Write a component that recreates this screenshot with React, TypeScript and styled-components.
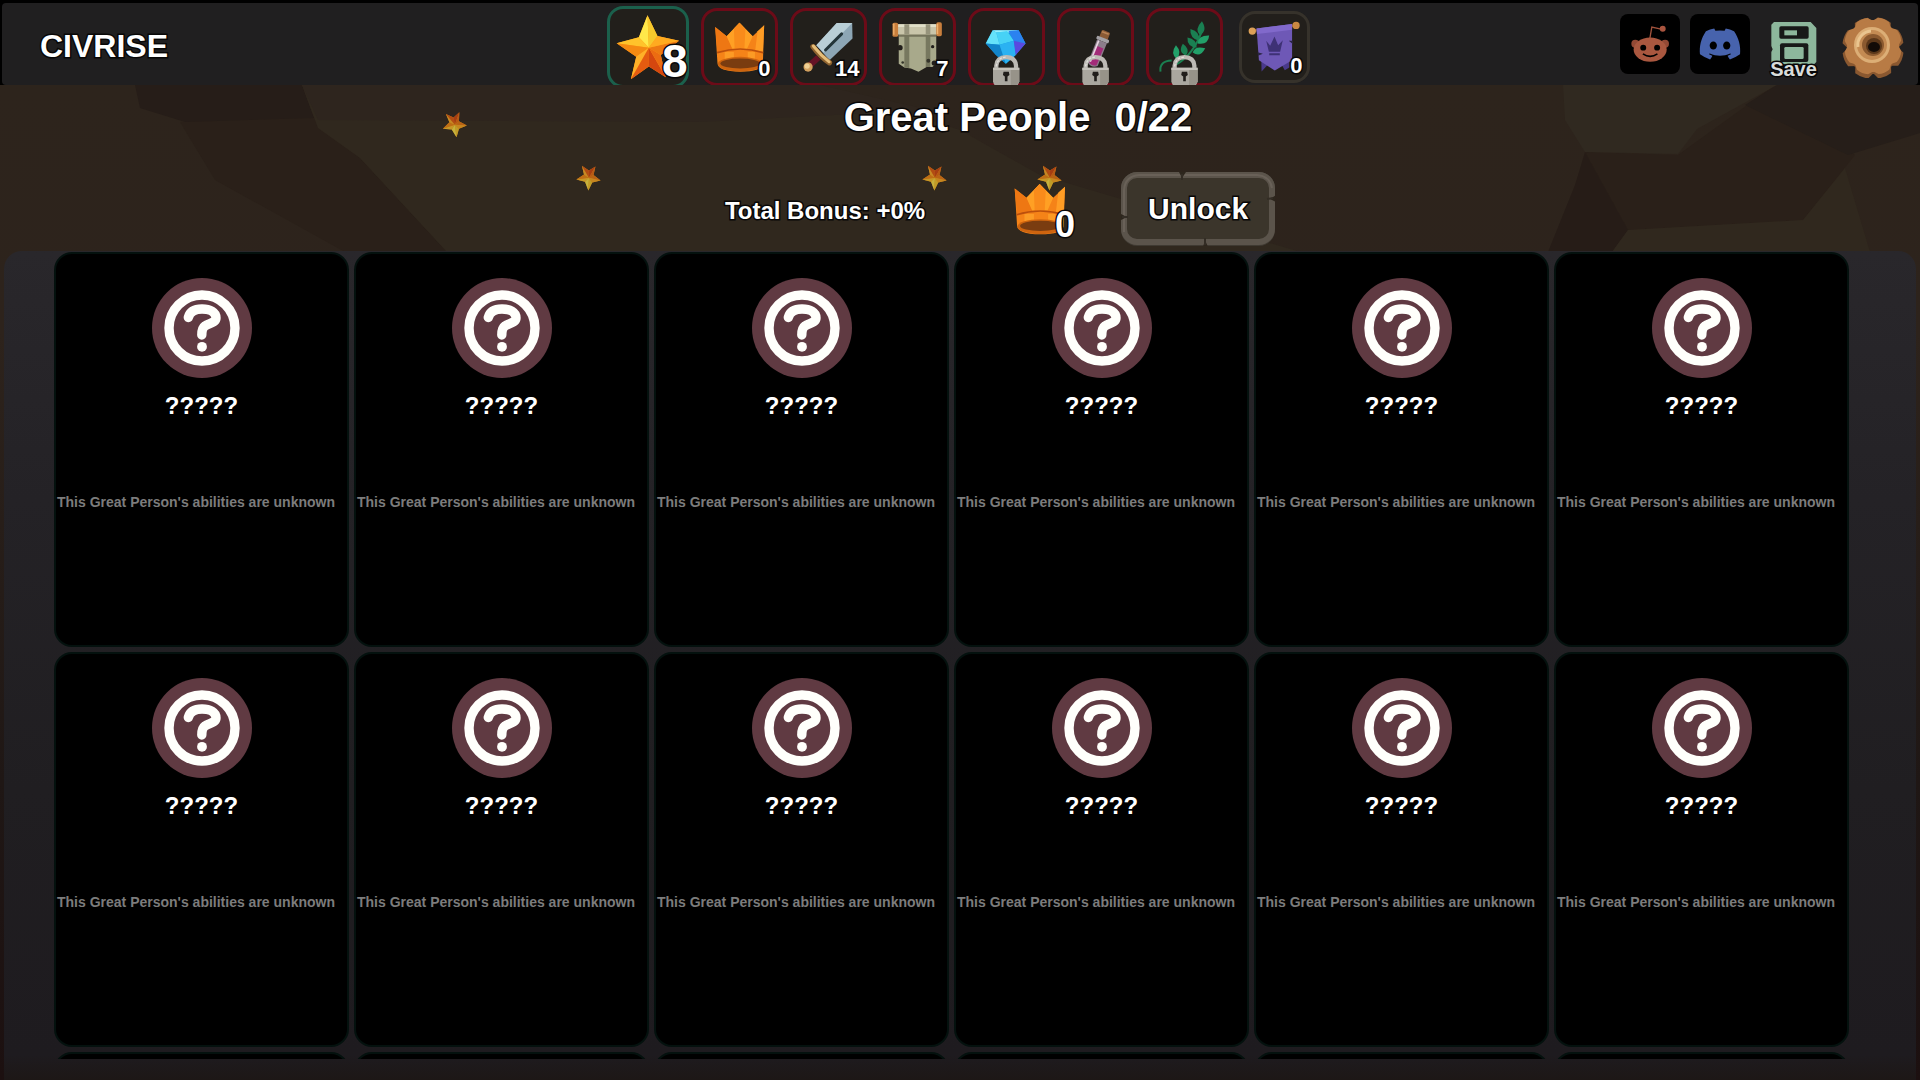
import React, { useState } from 'react';
import styled, { createGlobalStyle, css } from 'styled-components';
import { FaDiscord } from 'react-icons/fa';

const GlobalStyle = createGlobalStyle`
  *, *::before, *::after { box-sizing: border-box; }
  body { margin: 0; background: #000; }
  button { font: inherit; color: inherit; border: 0; padding: 0; background: none; cursor: pointer; }
`;

const outline = css`
  -webkit-text-stroke: 3px #080707;
  paint-order: stroke fill;
`;

const Page = styled.div`
  position: relative;
  display: flex;
  flex-direction: column;
  height: 100vh;
  min-width: 1400px;
  padding-top: 3px;
  overflow: hidden;
  color: #fff;
  font-family: 'Liberation Sans', Arial, sans-serif;
  font-weight: 700;
`;

const Backdrop = styled.svg`
  position: absolute;
  inset: 0;
  width: 100%;
  height: 100%;
  z-index: 0;
`;

const TopBar = styled.header`
  position: relative;
  z-index: 1;
  display: grid;
  grid-template-columns: 1fr auto 1fr;
  height: 82px;
  margin: 0 2px;
  overflow: hidden;
  border-radius: 4px;
  background: #201f20;
`;

const Brand = styled.div`
  align-self: center;
  padding-left: 38px;
  font-size: 32px;
  line-height: 40px;
  ${outline}
`;

const Resources = styled.nav`
  display: flex;
  align-items: flex-start;
  gap: 12px;
  padding: 5px 4px 0 0;
`;

type SlotKind = 'active' | 'locked' | 'plain';
const slotBorder = { active: '#1b604c', locked: '#6c0b18', plain: '#36322b' };

const Slot = styled.button<{ $kind: SlotKind }>`
  position: relative;
  width: ${p => (p.$kind === 'active' ? 82 : p.$kind === 'plain' ? 71 : 77)}px;
  height: ${p => (p.$kind === 'active' ? 82 : p.$kind === 'plain' ? 72 : 78)}px;
  margin: ${p => (p.$kind === 'active' ? '-2px 0 0' : p.$kind === 'plain' ? '3px 0 0 4px' : '0')};
  border-radius: 16px;
  background: #221f1b;
  box-shadow: inset 0 0 0 3px ${p => slotBorder[p.$kind]};
`;

const SlotArt = styled.svg`
  display: block;
  width: 100%;
  height: 100%;
`;

const Count = styled.span<{ $large?: boolean }>`
  position: absolute;
  right: ${p => (p.$large ? 1 : 7)}px;
  bottom: ${p => (p.$large ? 4 : 6)}px;
  font-size: ${p => (p.$large ? 46 : 22)}px;
  line-height: 1;
  ${outline}
`;

const Tools = styled.div`
  display: flex;
  justify-content: flex-end;
  align-items: flex-start;
  gap: 10px;
  padding: 11px 14px 0 0;
`;

const SocialLink = styled.a`
  display: grid;
  place-items: center;
  width: 60px;
  height: 60px;
  border-radius: 8px;
  background: #000;
  color: #4763ad;
`;

const SaveButton = styled.button`
  display: flex;
  flex-direction: column;
  align-items: center;
  width: 47px;
  margin: 8px 15px 0 10px;
  color: #d9dcda;
  font-size: 20px;
  line-height: 20px;
  span { margin-top: -5px; ${outline} }
`;

const IconButton = styled.button`
  width: 62px;
  height: 62px;
  margin-top: 2px;
  svg { display: block; }
`;

const Summary = styled.section`
  position: relative;
  z-index: 1;
  height: 166px;
  flex: none;
`;

const Heading = styled.h1`
  display: flex;
  justify-content: center;
  gap: 24px;
  margin: 0;
  padding: 10px 0 0 116px;
  font-size: 40px;
  line-height: 44px;
  ${outline}
`;

const SummaryRow = styled.div`
  position: relative;
  display: flex;
  justify-content: center;
  align-items: center;
  padding: 33px 0 0 80px;
`;

const Bonus = styled.p`
  margin: 4px 0 0;
  font-size: 24px;
  line-height: 28px;
  ${outline}
`;

const CrownTotal = styled.div`
  position: relative;
  width: 62px;
  height: 56px;
  margin: 4px 46px 0 88px;
  svg { display: block; width: 54px; height: 52px; }
  span {
    position: absolute;
    right: 0;
    bottom: -4px;
    font-size: 36px;
    line-height: 36px;
    ${outline}
  }
`;

const UnlockButton = styled.button`
  position: relative;
  width: 154px;
  height: 74px;
  font-size: 30px;
  line-height: 74px;
  svg { position: absolute; inset: 0; }
  span { position: relative; ${outline} }
`;

const FloatingStar = styled.svg<{ $x: number; $y: number; $turn: number }>`
  position: absolute;
  left: ${p => p.$x}%;
  top: ${p => p.$y}px;
  width: 25px;
  height: 26px;
  opacity: 0.72;
  transform: scaleY(-1) rotate(${p => p.$turn}deg);
`;

const Panel = styled.main`
  position: relative;
  z-index: 1;
  flex: 1;
  min-height: 0;
  margin: 0 4px;
  padding: 1px 67px 21px 50px;
  border-radius: 18px 18px 0 0;
  background: linear-gradient(180deg, #29272b 0, #242226 30%, #201e21 65%, #1e1b1f 97%, #1d1716 100%);
`;

const CardGrid = styled.ul`
  display: grid;
  grid-template-columns: repeat(6, 1fr);
  gap: 5px;
  height: 100%;
  margin: 0;
  padding: 0;
  overflow-y: auto;
  scrollbar-width: none;
  list-style: none;
`;

const Card = styled.li`
  display: flex;
  flex-direction: column;
  align-items: center;
  height: 395px;
  padding: 24px 1px;
  border: 2px solid #04110e;
  border-radius: 18px;
  background: #000;
`;

const PersonName = styled.h2`
  margin: 14px 0 74px;
  font-size: 24px;
  line-height: 28px;
`;

const Ability = styled.p`
  align-self: flex-start;
  margin: 0;
  color: #7c7c7c;
  font-size: 14px;
  line-height: 16px;
`;

const StarShape = () => (
  <g>
    <path d="M170 45 200 108 265 122 210 165 225 232 174 200 120 238 136 170 77 130 144 112Z" fill="#ff9a16" />
    <path d="M170 45 144 112 174 143Z" fill="#ffe84a" />
    <path d="M170 45 200 108 174 143Z" fill="#f7c92c" />
    <path d="M77 130 144 112 174 143Z" fill="#ffc32b" />
    <path d="M77 130 136 170 174 143Z" fill="#f58a12" />
    <path d="M120 238 136 170 174 143Z" fill="#ffb028" />
    <path d="M120 238 174 200 174 143Z" fill="#e55b10" />
    <path d="M225 232 174 200 174 143Z" fill="#d5470f" />
    <path d="M225 232 210 165 174 143Z" fill="#ec6c12" />
    <path d="M265 122 210 165 174 143Z" fill="#ed7a12" />
    <path d="M265 122 200 108 174 143Z" fill="#ffab20" />
  </g>
);

const CrownShape = () => (
  <g>
    <path d="M373 80 408 108 447 67 487 108 522 75 518 192Q515 216 449 216 381 216 380 190Z" fill="#f58318" />
    <path d="M373 80 408 108 428 148 380 156Z" fill="#ee7713" />
    <path d="M408 108 447 67 487 108 470 146 425 146Z" fill="#ffa024" />
    <path d="M447 67 465 87 462 146 432 146 430 85Z" fill="#f98b1b" />
    <path d="M522 75 502 93 495 150 518 156Z" fill="#ff9d25" />
    <path d="M379 158Q449 136 519 158" fill="none" stroke="#bb4f0c" strokeWidth="5" />
    <path d="M402 156h28v27h-28zM472 156h22v27h-22z" fill="#ffa52b" opacity=".7" />
    <ellipse cx="449" cy="193" rx="68" ry="22" fill="#cd640f" />
    <ellipse cx="449" cy="191" rx="60" ry="15" fill="#7a3c10" />
  </g>
);

const Padlock = ({ x }: { x: number }) => (
  <g transform={`translate(${x} 0)`}>
    <path d="M-30 206V198Q-28 172 0 172T30 198V206" fill="none" stroke="#bdbab5" strokeWidth="13" />
    <path d="M-30 200Q-26 172 0 172" fill="none" stroke="#e2e0dc" strokeWidth="4" strokeDasharray="8 4" />
    <path d="M-40 204H40V246Q38 256 28 262H-30Q-38 256-40 246Z" fill="#aaa79f" />
    <path d="M-40 204H40V211H-40Z" fill="#c4c1ba" />
    <path d="M14 211H40V246L28 262H14Z" fill="#979389" />
    <path d="M-8 216H8L10 226 4 231V245H-4V231L-10 226Z" fill="#211e1b" />
  </g>
);

const SwordShape = () => (
  <g>
    <path d="M740 68 787 68 788 115 718 181 678 136Z" fill="#8da6b5" />
    <path d="M740 68 787 68 700 158 678 136Z" fill="#b9ced6" />
    <path d="M755 101 706 150" stroke="#233439" strokeWidth="9" strokeLinecap="round" />
    <path d="M684 173 660 195" stroke="#641225" strokeWidth="19" />
    <path d="M668 140Q690 170 718 189" fill="none" stroke="#8f632f" strokeWidth="16" strokeLinecap="round" />
    <path d="M669 138Q692 167 717 186" fill="none" stroke="#e5bd79" strokeWidth="9" strokeLinecap="round" />
    <circle cx="653" cy="202" r="14" fill="#d2a05e" />
    <circle cx="650" cy="199" r="8" fill="#efcf94" />
  </g>
);

const ScrollShape = () => (
  <g>
    <path d="M928 100H1042V192L1030 202 1014 201 988 216 965 206 945 203 928 192Z" fill="#a8a98b" />
    <path d="M945 100H960V205L945 203ZM1010 100H1024V202H1010Z" fill="#77785f" />
    <path d="M928 100H1042V110H928Z" fill="#74735b" />
    <path d="M922 72H1046V103H922Z" fill="#c9c5aa" />
    <path d="M922 72H1046V80H922Z" fill="#e1dfc8" />
    <path d="M945 72H960V103H945ZM1010 72H1024V103H1010Z" fill="#96937b" />
    <rect x="909" y="67" width="17" height="43" rx="5" fill="#c97f3d" />
    <rect x="1042" y="66" width="17" height="42" rx="5" fill="#c97f3d" />
    <path d="M913 70v34M1046 70v32" stroke="#f0b26d" strokeWidth="4" />
    <circle cx="932" cy="143" r="8" fill="#221f1b" />
    <circle cx="1031" cy="140" r="5" fill="#221f1b" />
    <circle cx="1018" cy="183" r="6" fill="#34342a" />
    <circle cx="940" cy="188" r="4" fill="#34342a" />
    <circle cx="1036" cy="190" r="8" fill="#221f1b" />
  </g>
);

const GemShape = () => (
  <g>
    <path d="M132 90H211L232 130 202 165 172 192 142 165 111 130Z" fill="#159de0" />
    <path d="M132 90H211L190 97H143Z" fill="#9af0fb" />
    <path d="M143 97 176 92 196 122 153 134Z" fill="#47d2f6" />
    <path d="M132 90 143 97 153 134 111 130Z" fill="#65e2fa" />
    <path d="M211 90 232 130 196 122 180 92Z" fill="#2b82f0" />
    <path d="M111 130 153 134 172 192 142 165Z" fill="#1284ca" />
    <path d="M153 134 196 122 202 165 172 192Z" fill="#2bb2f2" />
    <path d="M196 122 232 130 202 165Z" fill="#5a4ae0" />
    <Padlock x={173} />
  </g>
);

const PotionShape = () => (
  <g>
    <g transform="rotate(22 450 140)">
      <rect x="440" y="88" width="27" height="24" rx="4" fill="#8a5a35" />
      <path d="M442 94h22" stroke="#b98255" strokeWidth="5" />
      <rect x="433" y="110" width="40" height="11" rx="4" fill="#a3a0a5" />
      <path d="M437 121H469V196Q453 210 437 196Z" fill="#8b7d8b" />
      <path d="M441 140H465V195Q453 204 441 195Z" fill="#a32b79" />
      <path d="M443 123V192" stroke="#e6d5e2" strokeWidth="5" />
    </g>
    <Padlock x={440} />
  </g>
);

const BranchShape = () => (
  <g fill="#1a8052">
    <path d="M636 216Q632 183 670 182M684 194Q735 165 761 95" fill="none" stroke="#1b8051" strokeWidth="6" />
    <path d="M762 63Q738 88 756 105 780 92 762 63Z" />
    <path d="M727 86Q724 114 754 123 758 94 727 86Z" />
    <path d="M784 106Q750 105 749 130 781 136 784 106Z" fill="#22a069" />
    <path d="M718 112Q716 140 746 143 747 117 718 112Z" />
    <path d="M772 145Q740 136 734 158 757 175 772 145Z" fill="#22a069" />
    <path d="M704 131Q688 157 714 167 728 147 704 131Z" />
    <path d="M683 136Q665 160 685 178 703 157 683 136Z" fill="#22a069" />
    <Padlock x={709} />
  </g>
);

const PennantShape = () => (
  <g>
    <path d="M910 92 1040 76" stroke="#7b5331" strokeWidth="8" />
    <circle cx="909" cy="93" r="11" fill="#dda056" />
    <circle cx="1041" cy="76" r="11" fill="#c98842" />
    <path d="M936 172 958 192 937 215ZM1020 172 998 195 1007 211 1022 202Z" fill="#49398b" />
    <path d="M922 85 1029 72 1029 181 977 212 929 181Z" fill="#6e58b6" />
    <path d="M922 85 1029 72 1029 89 923 102Z" fill="#8169cb" />
    <path d="M1019 122h12v10zM925 157l16 4-15 6z" fill="#2b2544" />
    <path d="M951 122 963 137 976 109 987 136 1001 121 993 155H959ZM960 160H992V166H960Z" fill="#3e3175" />
  </g>
);

const RedditShape = () => (
  <svg width="38" height="38" viewBox="94 76 115 114" aria-hidden="true">
    <path d="M151 117 157 82 185 88" fill="none" stroke="#a0523c" strokeWidth="4" />
    <circle cx="190" cy="87" r="9" fill="#a9553f" />
    <circle cx="107" cy="132" r="12" fill="#934935" />
    <circle cx="197" cy="132" r="12" fill="#934935" />
    <ellipse cx="152" cy="150" rx="50" ry="37" fill="#a9573f" />
    <circle cx="131" cy="144" r="9" fill="#000" />
    <circle cx="173" cy="144" r="9" fill="#000" />
    <path d="M130 163Q152 178 174 163" fill="none" stroke="#000" strokeWidth="5" />
  </svg>
);

const DiskShape = () => (
  <svg width="46" height="42" viewBox="516 68 136 126" aria-hidden="true">
    <path d="M516 76 524 68H634L651 86V188L645 194H516V158L520 150 516 140Z" fill="#8db79c" />
    <rect x="540" y="81" width="88" height="37" rx="5" fill="#171918" />
    <rect x="555" y="93" width="38" height="15" fill="#8db79c" />
    <rect x="542" y="132" width="85" height="56" rx="6" fill="#171918" />
    <rect x="555" y="143" width="58" height="36" rx="4" fill="#8db79c" />
  </svg>
);

const GearShape = () => {
  const teeth = Array.from({ length: 8 }, (_, i) => i * 45 + 22);
  return (
    <svg width="62" height="62" viewBox="0 0 62 62" aria-hidden="true">
      <g fill="#8a5830">
        {teeth.map(a => (
          <path key={a} d="M20 12 24 2Q31 0 38 2L42 12Z" transform={`rotate(${a} 31 32)`} />
        ))}
        <circle cx="31" cy="32" r="26" />
      </g>
      <g fill="#b87b45">
        {teeth.map(a => (
          <path key={a} d="M20 8 25 2Q31 0 37 2L42 8Z" transform={`rotate(${a} 31 30)`} />
        ))}
        <circle cx="31" cy="30" r="26" />
      </g>
      <circle cx="30" cy="29" r="18" fill="#dcae76" />
      <circle cx="30" cy="29" r="15" fill="#c48b53" />
      <path d="M16 31a14 14 0 0 1 13-16" fill="none" stroke="#eac58f" strokeWidth="3" />
      <circle cx="31" cy="29" r="11" fill="#8a592f" />
      <circle cx="32" cy="30" r="8" fill="#593619" />
      <ellipse cx="32" cy="31" rx="6" ry="5" fill="#120b07" />
    </svg>
  );
};

const MysteryBadge = () => (
  <svg width="100" height="100" viewBox="0 0 100 100" aria-hidden="true">
    <circle cx="50" cy="50" r="50" fill="#603a42" />
    <circle cx="50" cy="50" r="33" fill="none" stroke="#fffffb" strokeWidth="9.4" />
    <path
      d="M36.3 39.5C38 33 44 31 50 31C58 31 64 34 64 40C64 45 57 45 53 48C50 50 49.8 53 49.8 57"
      fill="none" stroke="#fffffb" strokeWidth="9.4" strokeLinecap="round" strokeLinejoin="round"
    />
    <circle cx="50" cy="68.8" r="4.9" fill="#fffffb" />
  </svg>
);

const StoneFrame = () => (
  <svg width="154" height="74" viewBox="0 0 154 74" aria-hidden="true">
    <rect x="3" y="3" width="148" height="68" rx="13" fill="#3b352b" stroke="#3f3a32" strokeWidth="6" />
    <rect x="3" y="3" width="148" height="67" rx="13" fill="none" stroke="#5b544b" strokeWidth="6" />
    <path d="M3 60V18Q4 4 18 3H136Q149 4 151 16" fill="none" stroke="#696158" strokeWidth="2" />
    <path d="M58 0 61 6 65 0ZM149 27 155 23V30ZM0 42 6 45 0 48ZM82 75 84 68 87 75Z" fill="#2d261d" />
    <path d="M61 2V8M146 27 152 26M1 45H7M84 66V73" stroke="#332d25" strokeWidth="2" />
  </svg>
);

const Terrain = () => (
  <Backdrop viewBox="0 0 1920 1080" preserveAspectRatio="none" aria-hidden="true">
    <defs>
      <linearGradient id="ground" x1="0" y1="0" x2="0" y2="1">
        <stop offset="0" stopColor="#2d241c" />
        <stop offset="0.25" stopColor="#2d231c" />
        <stop offset="0.7" stopColor="#1f1715" />
        <stop offset="1" stopColor="#1c1010" />
      </linearGradient>
    </defs>
    <rect y="85" width="1920" height="995" fill="url(#ground)" />
    <path d="M180 122 312 115 360 158 447 252H345L215 180Z" fill="#2a2019" />
    <path d="M135 85H302L314 118 185 122 140 108Z" fill="#261d18" />
    <path d="M302 85H820L960 130 1040 175 1300 252H447L360 158 318 128Z" fill="#30281e" />
    <path d="M302 85H820L930 110 700 122 318 120Z" fill="#2e251e" />
    <path d="M1585 152 1678 155 1775 85 1855 155 1803 220 1628 230Z" fill="#2a2019" />
    <path d="M1563 85H1777L1697 129 1678 154 1585 152 1565 120Z" fill="#302920" />
    <path d="M1777 85H1920V133L1848 155 1745 105Z" fill="#261e19" />
    <path d="M1585 152 1628 230 1612 252H1548L1575 185Z" fill="#261c17" />
    <path d="M1612 252 1628 230 1803 220 1845 168 1870 252Z" fill="#30281e" />
  </Backdrop>
);

const resources = [
  { name: 'Stars', count: '8', kind: 'active', box: '48 18 247 246', art: <StarShape /> },
  { name: 'Crowns', count: '0', kind: 'locked', box: '330 24 234 234', art: <CrownShape /> },
  { name: 'Swords', count: '14', kind: 'locked', box: '598 24 234 234', art: <SwordShape /> },
  { name: 'Scrolls', count: '7', kind: 'locked', box: '868 24 234 234', art: <ScrollShape /> },
  { name: 'Gems', kind: 'locked', box: '57 24 234 234', art: <GemShape /> },
  { name: 'Potions', kind: 'locked', box: '323 24 234 234', art: <PotionShape /> },
  { name: 'Herbs', kind: 'locked', box: '592 24 234 234', art: <BranchShape /> },
  { name: 'Banners', count: '0', kind: 'plain', box: '869 33 214 216', art: <PennantShape /> },
] as { name: string; count?: string; kind: SlotKind; box: string; art: React.ReactNode }[];

const floatingStars = [
  { x: 23, y: 27, turn: 10 },
  { x: 30, y: 80, turn: 0 },
  { x: 48, y: 80, turn: 0 },
  { x: 54, y: 80, turn: 0 },
];

const TOTAL_PEOPLE = 22;
const FIRST_BATCH = 12;

export default function App() {
  // Cards past the first batch get their content once the list is scrolled.
  const [filled, setFilled] = useState(FIRST_BATCH);

  return (
    <Page>
      <GlobalStyle />
      <Terrain />
      <TopBar>
        <Brand>CIVRISE</Brand>
        <Resources>
          {resources.map(r => (
            <Slot key={r.name} $kind={r.kind} aria-label={r.name}>
              <SlotArt viewBox={r.box} aria-hidden="true">{r.art}</SlotArt>
              {r.count && <Count $large={r.kind === 'active'}>{r.count}</Count>}
            </Slot>
          ))}
        </Resources>
        <Tools>
          <SocialLink href="#reddit" aria-label="Reddit"><RedditShape /></SocialLink>
          <SocialLink href="#discord" aria-label="Discord"><FaDiscord size={44} /></SocialLink>
          <SaveButton><DiskShape /><span>Save</span></SaveButton>
          <IconButton aria-label="Settings"><GearShape /></IconButton>
        </Tools>
      </TopBar>
      <Summary>
        {floatingStars.map(s => (
          <FloatingStar key={s.x} $x={s.x} $y={s.y} $turn={s.turn} viewBox="74 42 194 200" aria-hidden="true">
            <StarShape />
          </FloatingStar>
        ))}
        <Heading><span>Great People</span><span>0/{TOTAL_PEOPLE}</span></Heading>
        <SummaryRow>
          <Bonus>Total Bonus: +0%</Bonus>
          <CrownTotal>
            <svg viewBox="370 64 156 154" aria-hidden="true"><CrownShape /></svg>
            <span>0</span>
          </CrownTotal>
          <UnlockButton><StoneFrame /><span>Unlock</span></UnlockButton>
        </SummaryRow>
      </Summary>
      <Panel>
        <CardGrid onScroll={() => setFilled(TOTAL_PEOPLE)}>
          {Array.from({ length: TOTAL_PEOPLE }, (_, i) => (
            <Card key={i}>
              {i < filled && (
                <>
                  <MysteryBadge />
                  <PersonName>?????</PersonName>
                  <Ability>This Great Person's abilities are unknown</Ability>
                </>
              )}
            </Card>
          ))}
        </CardGrid>
      </Panel>
    </Page>
  );
}
